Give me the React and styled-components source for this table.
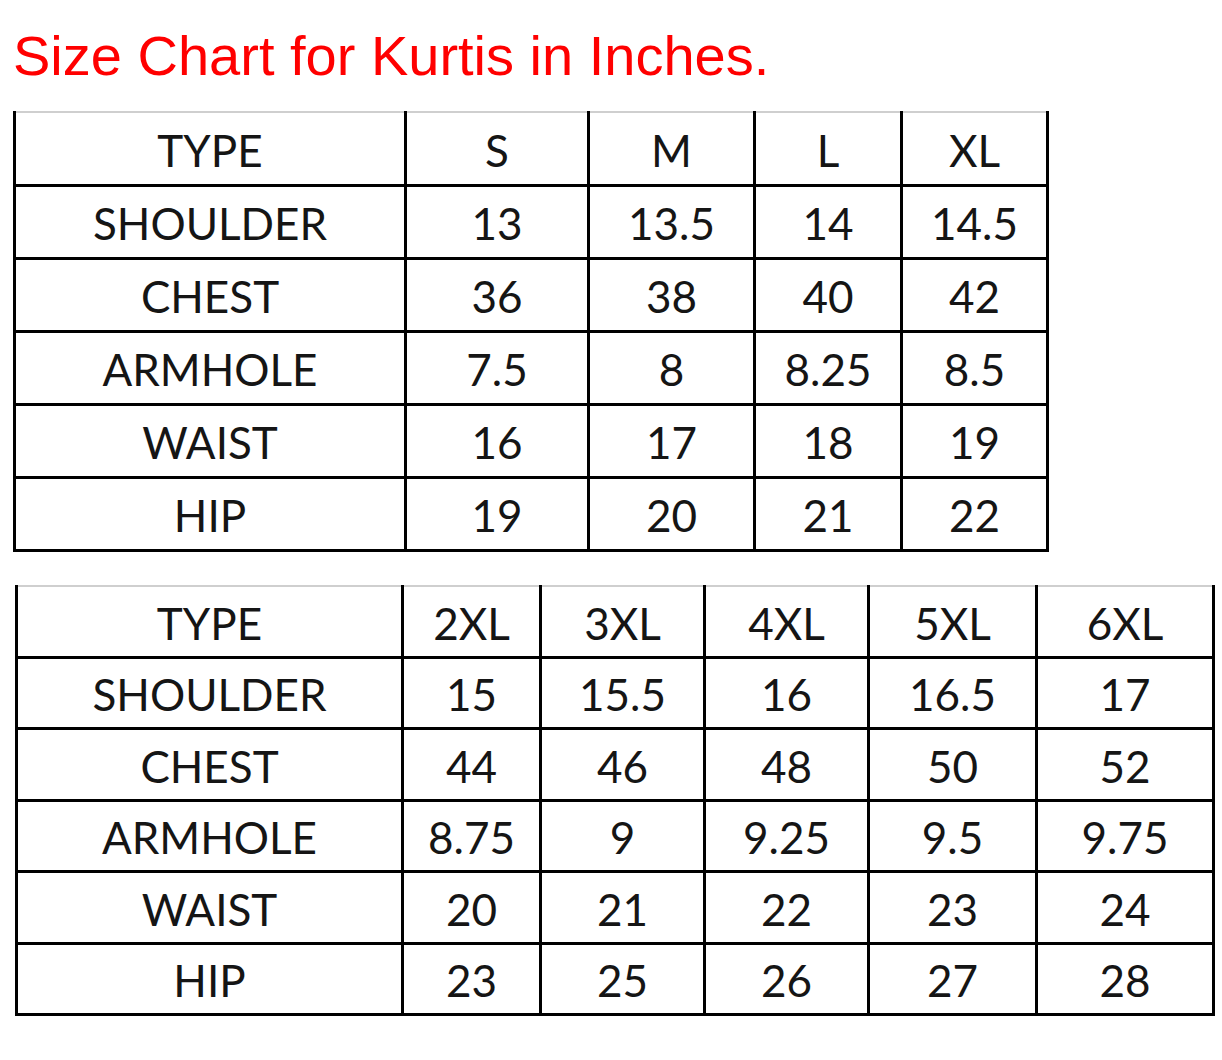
import styled, { createGlobalStyle } from "styled-components";

const GlobalStyle = createGlobalStyle`
  body {
    margin: 0;
    background: #fff;
  }
`;

const Page = styled.div`
  padding: 24px 0 0 13px;
`;

const Title = styled.h1`
  margin: 0 0 23px 0;
  font-family: "Liberation Sans", Arial, sans-serif;
  font-weight: 400;
  font-size: 56px;
  line-height: 64px;
  color: #ff0000;
`;

const Table = styled.table`
  border-collapse: collapse;
  table-layout: fixed;
  width: ${(p) => p.$width}px;
  margin: 0 0 ${(p) => p.$gap || 0}px ${(p) => p.$shift || 0}px;
  font-family: Lato, "Open Sans", sans-serif;
  font-size: 44px;
  color: #151515;
`;

const Row = styled.tr`
  height: ${(p) => p.$height}px;

  &:first-child td {
    border-top: 2px solid #cfcfcf;
  }
`;

const Cell = styled.td`
  border: 3px solid #000;
  padding: 3px 0 0 0;
  text-align: center;
  vertical-align: middle;
  white-space: nowrap;
`;

const chartOne = {
  width: 1033,
  rowHeight: 73,
  cols: [391, 183, 166, 147, 146],
  rows: [
    ["TYPE", "S", "M", "L", "XL"],
    ["SHOULDER", "13", "13.5", "14", "14.5"],
    ["CHEST", "36", "38", "40", "42"],
    ["ARMHOLE", "7.5", "8", "8.25", "8.5"],
    ["WAIST", "16", "17", "18", "19"],
    ["HIP", "19", "20", "21", "22"],
  ],
};

const chartTwo = {
  width: 1197,
  rowHeight: 71.5,
  cols: [386, 138, 164, 164, 168, 177],
  rows: [
    ["TYPE", "2XL", "3XL", "4XL", "5XL", "6XL"],
    ["SHOULDER", "15", "15.5", "16", "16.5", "17"],
    ["CHEST", "44", "46", "48", "50", "52"],
    ["ARMHOLE", "8.75", "9", "9.25", "9.5", "9.75"],
    ["WAIST", "20", "21", "22", "23", "24"],
    ["HIP", "23", "25", "26", "27", "28"],
  ],
};

function SizeTable({ chart, gap, shift }) {
  return (
    <Table $width={chart.width} $gap={gap} $shift={shift}>
      <colgroup>
        {chart.cols.map((w, i) => (
          <col key={i} style={{ width: w }} />
        ))}
      </colgroup>
      <tbody>
        {chart.rows.map((row, r) => (
          <Row key={r} $height={chart.rowHeight}>
            {row.map((val, c) => (
              <Cell key={c}>{val}</Cell>
            ))}
          </Row>
        ))}
      </tbody>
    </Table>
  );
}

function App() {
  return (
    <Page>
      <GlobalStyle />
      <Title>Size Chart for Kurtis in Inches.</Title>
      <SizeTable chart={chartOne} gap={33} />
      <SizeTable chart={chartTwo} shift={2} />
    </Page>
  );
}

export default App;
